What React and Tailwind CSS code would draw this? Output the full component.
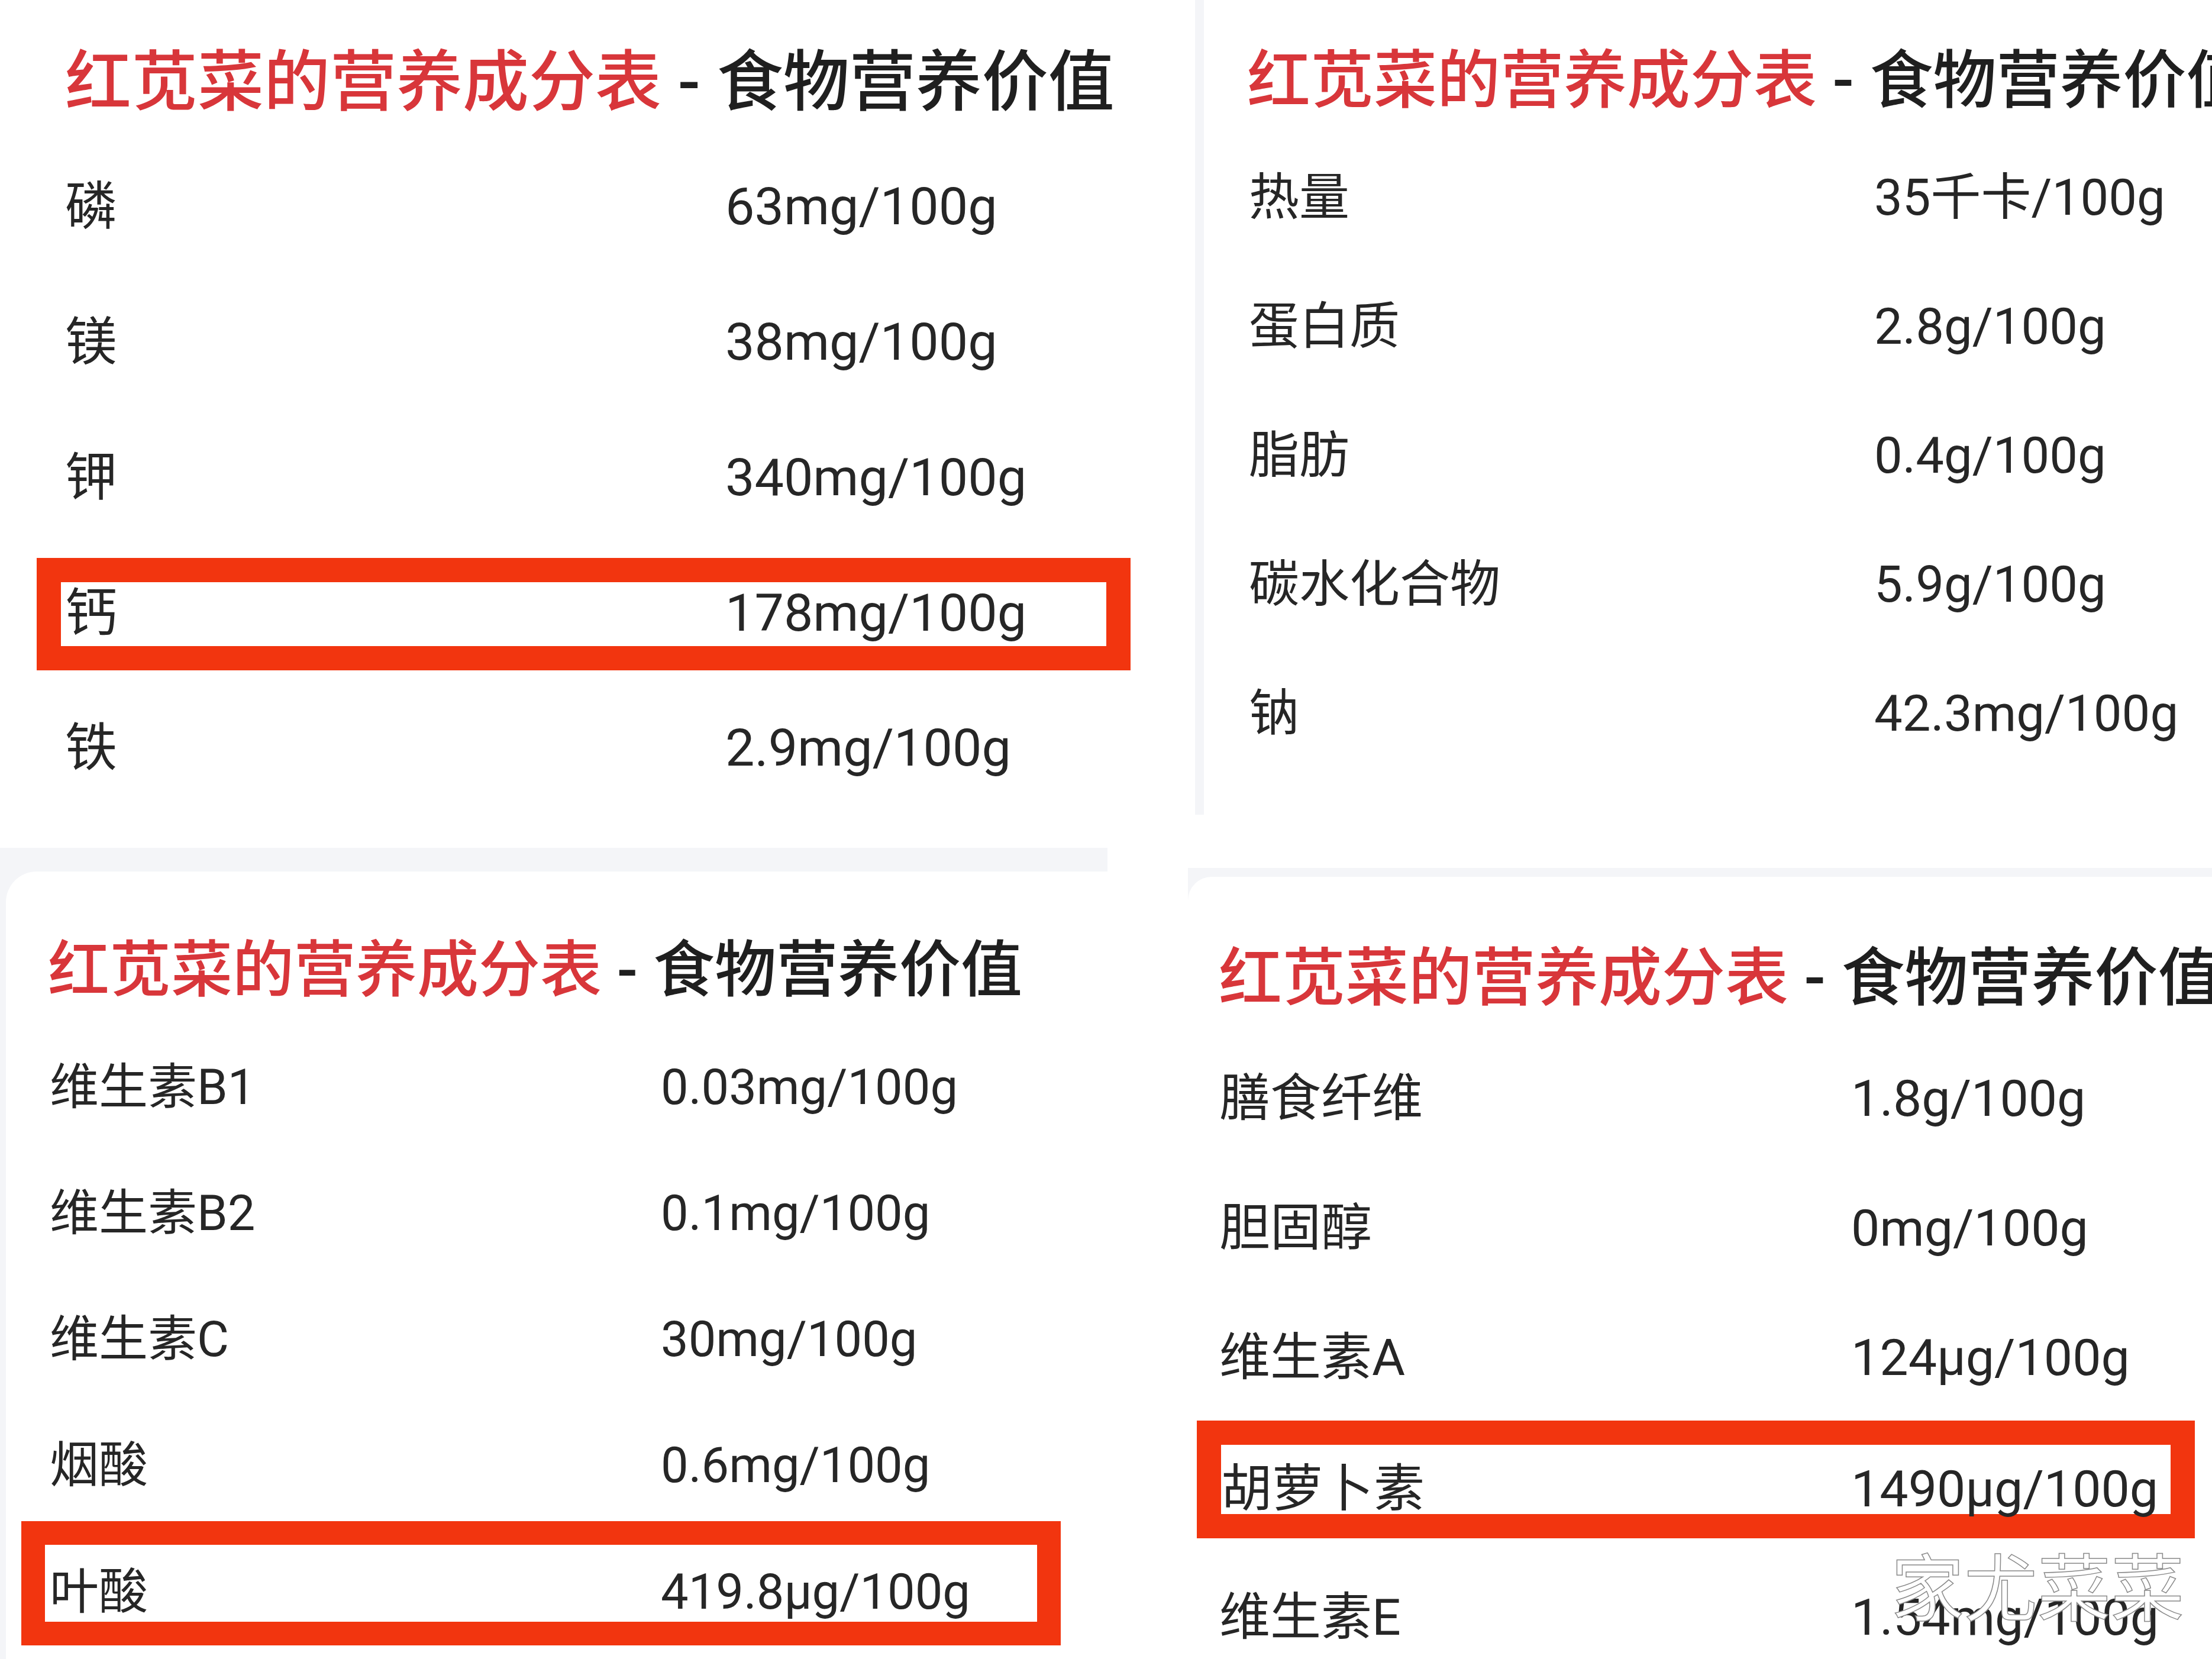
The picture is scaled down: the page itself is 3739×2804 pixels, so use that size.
import React from 'react';

// Four phone screenshots of the same nutrition table, pasted into one collage
const font = "font-[Roboto,'Noto_Sans_CJK_SC',sans-serif]";

function Title({ className }) {
  return (
    <div className={`flex h-[120px] items-center whitespace-nowrap font-medium leading-none ${className}`}>
      <p>
        <span className="text-[#d8363a]">红苋菜的营养成分表</span>
        <span className="text-[#1f1f1f]"> - 食物营养价值</span>
      </p>
    </div>
  );
}

function Row({ label, value, rowCls, labelCls }) {
  return (
    <div className={`flex items-center whitespace-nowrap ${rowCls}`}>
      <span className={`shrink-0 ${labelCls}`}>{label}</span>
      <span>{value}</span>
    </div>
  );
}

function TopLeft() {
  const row = 'h-[229px] pl-[110px]';
  const lab = 'w-[1116px]';
  return (
    <section className="h-[1433px] w-full shrink-0 overflow-hidden bg-white pt-[80px] text-[88px] leading-none">
      <Title className="pl-[110px] text-[112px]" />
      <div className="mt-[34px]">
        <Row label="磷" value="63mg/100g" rowCls={row} labelCls={lab} />
        <Row label="镁" value="38mg/100g" rowCls={row} labelCls={lab} />
        <Row label="钾" value="340mg/100g" rowCls={row} labelCls={lab} />
        <Row
          label="钙"
          value="178mg/100g"
          rowCls="ml-[62px] mt-[22px] h-[190px] w-[1849px] border-[41px] border-[#f2350f] pb-[4px] pl-[7px]"
          labelCls={lab}
        />
        <Row label="铁" value="2.9mg/100g" rowCls={`mt-[16px] ${row}`} labelCls={lab} />
      </div>
    </section>
  );
}

function TopRight() {
  const row = 'h-[218px] pl-[76px]';
  const lab = 'w-[1057px]';
  return (
    <section className="ml-[12px] flex h-[1377px] shrink-0 bg-[#f4f5f8]">
      <div className="w-[15px] shrink-0" />
      <div className="flex-1 overflow-hidden bg-white pt-[76px] text-[85px] leading-none">
        <Title className="pl-[73px] text-[107px]" />
        <div className="mt-[29px]">
          <Row label="热量" value="35千卡/100g" rowCls={row} labelCls={lab} />
          <Row label="蛋白质" value="2.8g/100g" rowCls={row} labelCls={lab} />
          <Row label="脂肪" value="0.4g/100g" rowCls={row} labelCls={lab} />
          <Row label="碳水化合物" value="5.9g/100g" rowCls={row} labelCls={lab} />
          <Row label="钠" value="42.3mg/100g" rowCls={row} labelCls={lab} />
        </div>
      </div>
    </section>
  );
}

function BottomLeft() {
  const row = 'h-[213px] pl-[74px]';
  const lab = 'w-[1033px]';
  return (
    <section className="min-h-0 w-[1872px] flex-1 overflow-hidden bg-[#f4f5f8] pl-[10px] pt-[40px]">
      <div className="h-full overflow-hidden rounded-tl-[52px] bg-white pt-[108px] text-[83px] leading-none">
        <Title className="pl-[71px] text-[104px]" />
        <div className="mt-[30px]">
          <Row label="维生素B1" value="0.03mg/100g" rowCls={row} labelCls={lab} />
          <Row label="维生素B2" value="0.1mg/100g" rowCls={row} labelCls={lab} />
          <Row label="维生素C" value="30mg/100g" rowCls={row} labelCls={lab} />
          <Row label="烟酸" value="0.6mg/100g" rowCls={row} labelCls={lab} />
          <Row
            label="叶酸"
            value="419.8µg/100g"
            rowCls="-mt-[12px] ml-[26px] h-[210px] w-[1757px] border-[40px] border-[#f2350f] pl-[8px] pt-[28px]"
            labelCls={lab}
          />
        </div>
      </div>
    </section>
  );
}

function BottomRight() {
  const row = 'h-[219px] pl-[53px]';
  const lab = 'w-[1068px]';
  return (
    <section className="mt-[90px] min-h-0 flex-1 overflow-hidden bg-[#f4f5f8] pt-[15px]">
      <div className="h-full overflow-hidden rounded-tl-[40px] bg-white pt-[111px] text-[86px] leading-none">
        <Title className="pl-[52px] text-[107px]" />
        <div className="mt-[34px]">
          <Row label="膳食纤维" value="1.8g/100g" rowCls={row} labelCls={lab} />
          <Row label="胆固醇" value="0mg/100g" rowCls={row} labelCls={lab} />
          <Row label="维生素A" value="124µg/100g" rowCls={row} labelCls={lab} />
          <Row
            label="胡萝卜素"
            value="1490µg/100g"
            rowCls="-mt-[3px] ml-[15px] h-[199px] w-[1687px] border-[41px] border-[#f2350f] pt-[32px]"
            labelCls="w-[1065px]"
          />
          <Row label="维生素E" value="1.54mg/100g" rowCls={`mt-[24px] ${row}`} labelCls={lab} />
        </div>
      </div>
    </section>
  );
}

export default function App() {
  return (
    <div className={`relative flex h-[2804px] w-[3739px] overflow-hidden bg-white text-[#262626] ${font}`}>
      <div className="flex w-[2008px] shrink-0 flex-col">
        <TopLeft />
        <BottomLeft />
      </div>
      <div className="flex min-w-0 flex-1 flex-col">
        <TopRight />
        <BottomRight />
      </div>
      {/* watermark sits on top of the last value */}
      <div className="absolute left-[3196px] top-[2626px] text-[124px] leading-none text-white [-webkit-text-stroke:1.5px_#8a8a8a]">
        家尤菜菜
      </div>
    </div>
  );
}
